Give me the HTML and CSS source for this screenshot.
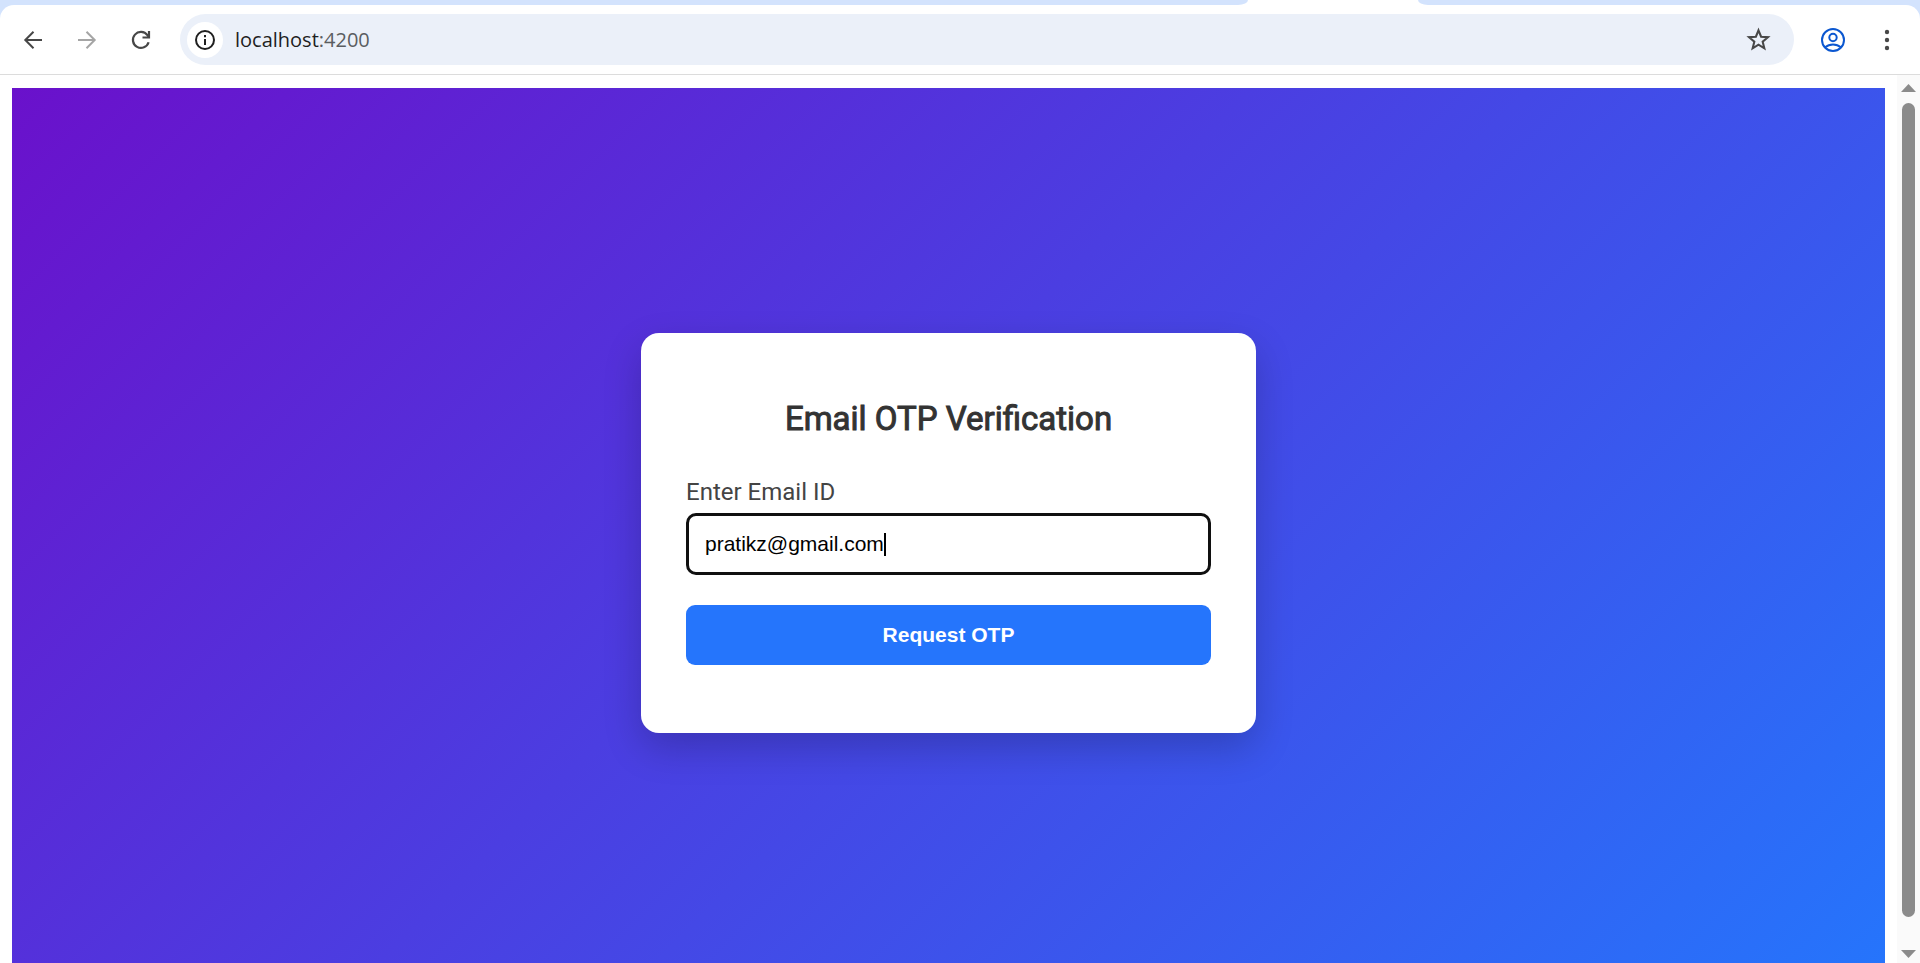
FILE: index.html
```html
<!DOCTYPE html>
<html lang="en">
<head>
<meta charset="utf-8">
<title>Email OTP Verification</title>
<link rel="stylesheet" href="styles.css">
</head>
<body>
<header class="chrome">
  <div class="tabs"><div class="tabs-left"></div><div class="tabs-active"></div><div class="tabs-right"></div></div>
  <nav class="toolbar" aria-label="Browser">
    <button class="tool" type="button" aria-label="Back">
      <svg width="20" height="20" viewBox="0 0 20 20" fill="none" stroke="#474747" stroke-width="2"><path d="M19 10H3M10.500 1.800L2.300 10l8.200 8.200"/></svg>
    </button>
    <button class="tool" type="button" aria-label="Forward">
      <svg width="20" height="20" viewBox="0 0 20 20" fill="none" stroke="#a5a5a5" stroke-width="2"><path d="M1 10h16M9.500 1.800l8.200 8.200-8.200 8.200"/></svg>
    </button>
    <button class="tool" type="button" aria-label="Reload">
      <svg width="20" height="20" viewBox="0 0 20 20" fill="none" stroke="#474747" stroke-width="2.200"><path d="M17.600 12.200A8 8 0 1 1 16.400 5.200L17.500 6.500"/><path d="M18 1v6.500h-6.500"/></svg>
    </button>
    <div class="address">
      <button class="tool site" type="button" aria-label="Site information">
        <svg width="22" height="22" viewBox="0 0 22 22" fill="none" stroke="#1f1f1f" stroke-width="2"><circle cx="11" cy="11" r="9"/><path d="M11 10v6M11 6v2.200"/></svg>
      </button>
      <div class="url" role="textbox" aria-label="Address"><span class="host">localhost</span>:4200</div>
      <button class="tool" type="button" aria-label="Bookmark">
        <svg width="25" height="25" viewBox="0 0 24 24" fill="none" stroke="#474747" stroke-width="2"><path d="M12 3.200l2.500 6.100 6.600.5-5.100 4.300 1.600 6.400-5.600-3.500-5.600 3.500 1.600-6.400-5.100-4.300 6.600-.5z"/></svg>
      </button>
    </div>
    <button class="tool" type="button" aria-label="Profile">
      <svg width="24" height="24" viewBox="0 0 24 24" fill="none" stroke="#0b57d0" stroke-width="2"><circle cx="12" cy="12" r="11"/><circle cx="12" cy="9.500" r="3.700"/><path d="M4.200 19.200c4.300-3.700 11.300-3.700 15.600 0"/></svg>
    </button>
    <button class="tool" type="button" aria-label="Menu">
      <svg width="24" height="24" viewBox="0 0 24 24" fill="#474747"><circle cx="12" cy="4" r="2.200"/><circle cx="12" cy="12" r="2.200"/><circle cx="12" cy="20" r="2.200"/></svg>
    </button>
  </nav>
</header>
<div class="window">
  <main class="page">
    <section class="stage">
      <form class="card">
        <h2 class="title">Email OTP Verification</h2>
        <label class="label" for="email">Enter Email ID</label>
        <div class="field">
          <input class="email" id="email" type="text" value="pratikz@gmail.com"><span class="caret"></span>
        </div>
        <button class="submit" type="button">Request OTP</button>
      </form>
    </section>
  </main>
  <div class="scrollbar" aria-hidden="true">
    <svg width="15" height="8" viewBox="0 0 15 8"><path d="M7.500 0L15 8H0z" fill="#8b8b8b"/></svg>
    <div class="thumb"></div>
    <svg width="15" height="8" viewBox="0 0 15 8"><path d="M0 0h15L7.500 8z" fill="#8b8b8b"/></svg>
  </div>
</div>
</body>
</html>
```
FILE: styles.css
```css
* { box-sizing: border-box; }
body {
  margin: 0;
  height: 100vh;
  display: flex;
  flex-direction: column;
  overflow: hidden;
  background: #fff;
  font-family: Roboto, sans-serif;
}
button { border: 0; background: none; padding: 0; }
.chrome { background: #d3e3fd; }
.tabs { display: flex; height: 5px; background: #fff; }
.tabs-left { width: 65%; background: #d3e3fd; border-radius: 0 0 10px 0 / 0 0 5px 0; }
.tabs-active { width: 170px; }
.tabs-right { flex: 1; background: #d3e3fd; border-radius: 0 0 0 10px / 0 0 0 5px; }
.toolbar {
  display: flex;
  align-items: center;
  gap: 18px;
  padding: 9px 15px;
  background: #fff;
  border-bottom: 1px solid #dcdcdc;
  border-radius: 14px 14px 0 0;
}
.tool {
  display: flex;
  align-items: center;
  justify-content: center;
  width: 36px;
  height: 36px;
  border-radius: 50%;
}
.address {
  flex: 1;
  display: flex;
  align-items: center;
  gap: 12px;
  height: 51px;
  margin: 0 3px;
  padding: 0 18px 0 7px;
  border-radius: 26px;
  background: #ebf0f9;
}
.site { background: #fff; }
.url {
  flex: 1;
  font-family: "Open Sans", "Noto Sans", sans-serif;
  font-size: 20px;
  line-height: 28px;
  color: #5a5d61;
}
.host { color: #1f1f1f; }
.window { flex: 1; min-height: 0; display: flex; }
.page { flex: 1; padding: 13px 12px 0; overflow: hidden; }
.stage {
  display: flex;
  align-items: center;
  justify-content: center;
  height: calc(100vh - 73px);
  background: linear-gradient(135deg, #6a11cb, #2575fc);
}
.card {
  display: flex;
  flex-direction: column;
  width: 615px;
  padding: 66px 45px 68px;
  border-radius: 18px;
  background: #fff;
  box-shadow: 0 15px 38px rgba(0, 0, 0, 0.2);
}
.title {
  margin: 0 0 37px;
  font-size: 33px;
  line-height: 40px;
  font-weight: 400;
  -webkit-text-stroke: 1px #333;
  text-align: center;
  color: #333;
}
.label { margin-bottom: 5px; font-size: 24px; line-height: 32px; color: #444; }
.field {
  display: flex;
  align-items: center;
  height: 62px;
  padding: 0 16px;
  border: 3px solid #101010;
  border-radius: 10px;
}
.email {
  field-sizing: content;
  border: 0;
  padding: 0;
  outline: 0;
  background: none;
  font-family: "Liberation Sans", Arial, sans-serif;
  font-size: 21px;
  color: #000;
}
.caret { width: 2px; height: 23px; background: #000; }
.submit {
  height: 60px;
  margin-top: 30px;
  border-radius: 9px;
  background: #2575fc;
  color: #fff;
  font-family: "Liberation Sans", Arial, sans-serif;
  font-size: 21px;
  font-weight: 700;
}
.scrollbar {
  display: flex;
  flex-direction: column;
  align-items: center;
  gap: 11px;
  width: 23px;
  padding: 9px 0 5px;
  background: #fafafa;
}
.thumb { flex: 1; width: 13px; margin-bottom: 22px; border-radius: 7px; background: #8b8b8b; }
```
